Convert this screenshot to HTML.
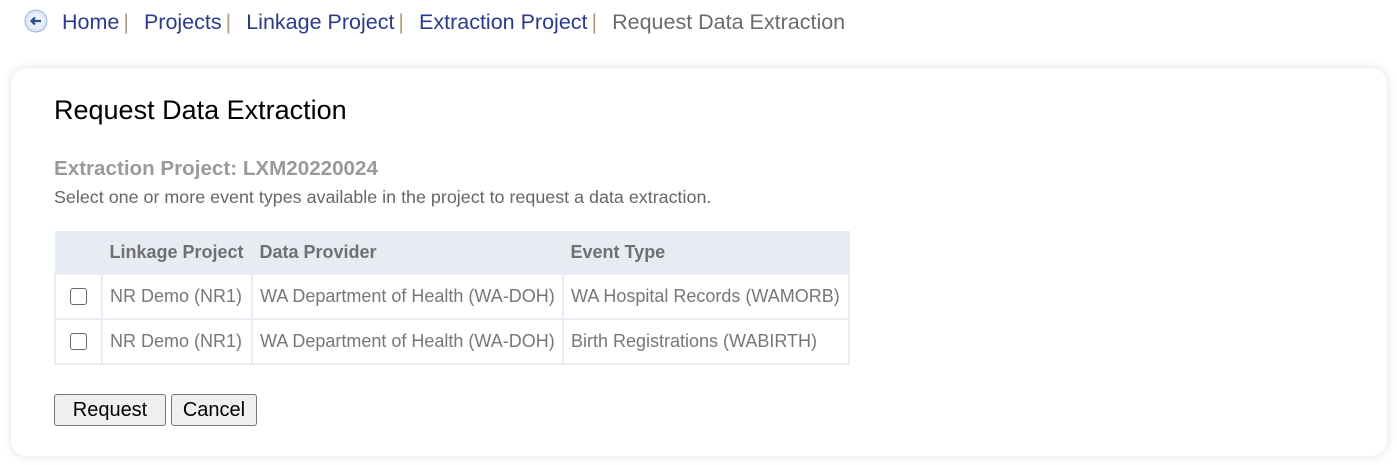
<!DOCTYPE html>
<html><head><style>
body{margin:0;background:#fff;font-family:"Liberation Sans",Arial,sans-serif;width:1397px;height:465px;overflow:hidden;position:relative}
.bc{position:absolute;left:24px;top:9px;font-size:21.5px;color:#2b3a8c;white-space:nowrap}
.bc span.sep{color:#b09a80;margin:0 15px 0 4px}
.bc .cur{color:#6b6b6b}
.icon{display:inline-block;vertical-align:-4px;margin-right:14px}
.card{position:absolute;left:11px;top:68px;width:1376px;height:388px;background:#fff;border-radius:16px;box-shadow:0 0 10px rgba(0,0,0,0.12)}
h1{position:absolute;left:43px;top:27px;margin:0;font-weight:normal;font-size:27px;color:#000}
.sub{position:absolute;left:43px;top:89px;font-weight:bold;font-size:20.6px;color:#9a9a9a}
.desc{position:absolute;left:43px;top:119px;font-size:17.9px;color:#666}
table{position:absolute;left:43px;top:163px;border-collapse:collapse;font-size:18px;color:#777;table-layout:fixed;width:794px}
th{background:#e7ecf3;height:41px;text-align:left;padding:0 7px;color:#707070;font-weight:bold;border:1px solid #e7ecf3;white-space:nowrap}
td{border:2px solid #e9edf3;height:43px;padding:0 7px;white-space:nowrap;overflow:visible}
.cb{width:15px;height:15px;border:1.5px solid #666;border-radius:3px;margin:0 auto}
button{position:absolute;top:326px;height:32px;font-family:inherit;font-size:20px;background:#f0f0f0;border:1px solid #777;border-radius:3px;color:#000;padding:0}
</style></head><body>
<div class="bc"><svg class="icon" width="24" height="24" viewBox="0 0 24 24"><circle cx="12" cy="12" r="11" fill="#dbe6f5" stroke="#9fb7de"/><circle cx="12" cy="12" r="8" fill="#eaf1fb"/><path d="M17 12H8M11 8.5L7.5 12 11 15.5" stroke="#2b4a8c" stroke-width="2.2" fill="none"/></svg>Home<span class="sep">|</span>Projects<span class="sep">|</span>Linkage Project<span class="sep">|</span>Extraction Project<span class="sep">|</span><span class="cur">Request Data Extraction</span></div>
<div class="card">
<h1>Request Data Extraction</h1>
<div class="sub">Extraction Project: LXM20220024</div>
<div class="desc">Select one or more event types available in the project to request a data extraction.</div>
<table>
<colgroup><col style="width:47px"><col style="width:150px"><col style="width:311px"><col style="width:286px"></colgroup>
<tr><th></th><th>Linkage Project</th><th>Data Provider</th><th>Event Type</th></tr>
<tr><td><div class="cb"></div></td><td>NR Demo (NR1)</td><td>WA Department of Health (WA-DOH)</td><td>WA Hospital Records (WAMORB)</td></tr>
<tr><td><div class="cb"></div></td><td>NR Demo (NR1)</td><td>WA Department of Health (WA-DOH)</td><td>Birth Registrations (WABIRTH)</td></tr>
</table>
<button style="left:43px;width:112px">Request</button>
<button style="left:160px;width:86px">Cancel</button>
</div>
</body></html>
